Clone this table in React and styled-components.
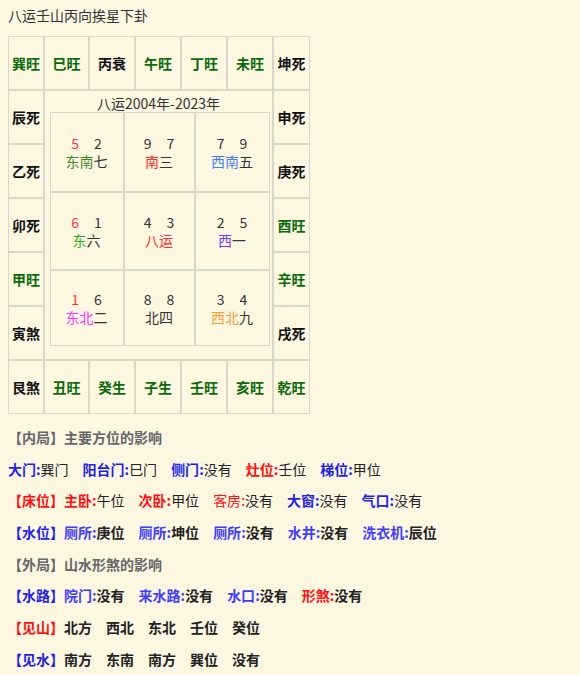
import React from "react";
import styled, { createGlobalStyle } from "styled-components";

const GlobalStyle = createGlobalStyle`
  html, body {
    margin: 0;
    background: #fdf7e2;
  }
  body {
    font-family: "Noto Sans CJK SC", "Microsoft YaHei", sans-serif;
    font-size: 14px;
    color: #333;
  }
`;

const Page = styled.div`
  padding: 6px 8px;
  width: 564px;
`;

const Title = styled.div`
  line-height: 18px;
  color: #333;
`;

const Board = styled.div`
  margin-top: 12px;
  display: grid;
  grid-template-columns: 36px 45px 46px 46px 46px 46px 37px;
  grid-template-rows: repeat(7, 54px);
  width: 302px;
`;

const Cell = styled.div`
  border: 1px solid #d9d6cc;
  display: flex;
  align-items: center;
  justify-content: center;
  font-weight: bold;
  font-size: 14px;
  color: ${(p) => (p.$green ? "#0b6b0b" : "#111")};
  white-space: nowrap;
`;

const Center = styled.div`
  grid-column: 2 / 7;
  grid-row: 2 / 7;
  border: 1px solid #d9d6cc;
  display: flex;
  flex-direction: column;
  align-items: center;
  padding-top: 3px;
`;

const Period = styled.div`
  line-height: 18px;
  color: #333;
`;

const Nine = styled.div`
  display: grid;
  grid-template-columns: 74px 71px 75px;
  grid-template-rows: 80px 78px 76px;
  width: 220px;
  margin-left: 2px;
`;

const Palace = styled.div`
  border: 1px solid #d9d6cc;
  display: flex;
  flex-direction: column;
  align-items: center;
  justify-content: center;
  color: #333;
`;

const Stars = styled.div`
  display: flex;
  gap: 15px;
  height: 18px;
`;

const Words = styled.div`
  height: 18px;
  white-space: nowrap;
`;

const C = styled.span`
  display: inline-block;
  line-height: 18px;
  height: 18px;
  overflow: hidden;
  color: ${(p) => p.$c || "#333"};
`;

const Notes = styled.div`
  margin-top: 8px;
`;

const Line = styled.div`
  height: 31.7px;
  line-height: 31.7px;
  display: flex;
  gap: 14px;
  white-space: nowrap;
`;

const Head = styled.div`
  height: 31.7px;
  line-height: 31.7px;
  font-weight: bold;
  color: #666;
`;

const Item = styled.span``;

const Tag = styled.span`
  color: ${(p) => p.$c};
  font-weight: ${(p) => (p.$thin ? "normal" : "bold")};
  margin-right: ${(p) => (p.$pull ? "-14px" : "0")};
`;

const Val = styled.span`
  color: #222;
  font-weight: ${(p) => (p.$bold ? "bold" : "normal")};
`;

const Group = styled.span`
  display: flex;
`;

const BLUE = "#1f1fe8";
const SOFT = "#3d3dff";
const RED = "#ff1010";

const top = [
  ["巽旺", true], ["巳旺", true], ["丙衰", false], ["午旺", true], ["丁旺", true], ["未旺", true], ["坤死", false],
];
const left = [["辰死", false], ["乙死", false], ["卯死", false], ["甲旺", true], ["寅煞", false]];
const right = [["申死", false], ["庚死", false], ["酉旺", true], ["辛旺", true], ["戌死", false]];
const bottom = [
  ["艮煞", false], ["丑旺", true], ["癸生", true], ["子生", true], ["壬旺", true], ["亥旺", true], ["乾旺", true],
];

const palaces = [
  { a: "5", ac: "#ff3333", b: "2", dir: "东南", dc: "#3c8a1e", n: "七" },
  { a: "9", b: "7", dir: "南", dc: "#ff2a2a", n: "三" },
  { a: "7", b: "9", dir: "西南", dc: "#3f7dff", n: "五" },
  { a: "6", ac: "#ff3333", b: "1", dir: "东", dc: "#33aa22", n: "六" },
  { a: "4", b: "3", dir: "八运", dc: "#ff2a2a", n: "" },
  { a: "2", b: "5", dir: "西", dc: "#6a3cff", n: "一" },
  { a: "1", ac: "#ff3333", b: "6", dir: "东北", dc: "#ff33ff", n: "二" },
  { a: "8", b: "8", dir: "北四", dc: "#333", n: "" },
  { a: "3", b: "4", dir: "西北", dc: "#ff9a2e", n: "九" },
];

const Pair = ({ label, value, c = BLUE, thin, bold }) => (
  <Item>
    <Tag $c={c} $thin={thin}>{label}:</Tag>
    <Val $bold={bold}>{value}</Val>
  </Item>
);

export default function App() {
  return (
    <Page>
      <GlobalStyle />
      <Title>八运壬山丙向挨星下卦</Title>
      <Board>
        {top.map(([t, g]) => (
          <Cell key={t} $green={g}>{t}</Cell>
        ))}
        <Cell $green={left[0][1]}>{left[0][0]}</Cell>
        <Center>
          <Period>八运2004年-2023年</Period>
          <Nine>
            {palaces.map((p, i) => (
              <Palace key={i}>
                <Stars>
                  <C $c={p.ac}>{p.a}</C>
                  <C>{p.b}</C>
                </Stars>
                <Words>
                  <C $c={p.dc}>{p.dir}</C>
                  {p.n && <C>{p.n}</C>}
                </Words>
              </Palace>
            ))}
          </Nine>
        </Center>
        <Cell $green={right[0][1]}>{right[0][0]}</Cell>
        {left.slice(1).map(([t, g], i) => (
          <React.Fragment key={t}>
            <Cell $green={g}>{t}</Cell>
            <Cell $green={right[i + 1][1]}>{right[i + 1][0]}</Cell>
          </React.Fragment>
        ))}
        {bottom.map(([t, g]) => (
          <Cell key={t} $green={g}>{t}</Cell>
        ))}
      </Board>
      <Notes>
        <Head>【内局】主要方位的影响</Head>
        <Line>
          <Pair label="大门" value="巽门" />
          <Pair label="阳台门" value="巳门" />
          <Pair label="侧门" value="没有" />
          <Pair label="灶位" value="壬位" c={RED} />
          <Pair label="梯位" value="甲位" />
        </Line>
        <Line>
          <Group>
            <Tag $c={RED}>【床位】</Tag>
            <Pair label="主卧" value="午位" c={RED} />
          </Group>
          <Pair label="次卧" value="甲位" c={RED} />
          <Pair label="客房" value="没有" c={RED} thin />
          <Pair label="大窗" value="没有" />
          <Pair label="气口" value="没有" />
        </Line>
        <Line>
          <Group>
            <Tag $c={BLUE}>【水位】</Tag>
            <Pair label="厕所" value="庚位" c={SOFT} bold />
          </Group>
          <Pair label="厕所" value="坤位" c={SOFT} bold />
          <Pair label="厕所" value="没有" c={SOFT} bold />
          <Pair label="水井" value="没有" c={SOFT} bold />
          <Pair label="洗衣机" value="辰位" c={SOFT} bold />
        </Line>
        <Head>【外局】山水形煞的影响</Head>
        <Line>
          <Group>
            <Tag $c={BLUE}>【水路】</Tag>
            <Pair label="院门" value="没有" c={SOFT} bold />
          </Group>
          <Pair label="来水路" value="没有" c={SOFT} bold />
          <Pair label="水口" value="没有" c={SOFT} bold />
          <Pair label="形煞" value="没有" c={RED} bold />
        </Line>
        <Line>
          <Tag $c={RED} $pull>【见山】</Tag>
          {["北方", "西北", "东北", "壬位", "癸位"].map((v, i) => (
            <Val key={i} $bold>{v}</Val>
          ))}
        </Line>
        <Line>
          <Tag $c={BLUE} $pull>【见水】</Tag>
          {["南方", "东南", "南方", "巽位", "没有"].map((v, i) => (
            <Val key={i} $bold>{v}</Val>
          ))}
        </Line>
      </Notes>
    </Page>
  );
}
